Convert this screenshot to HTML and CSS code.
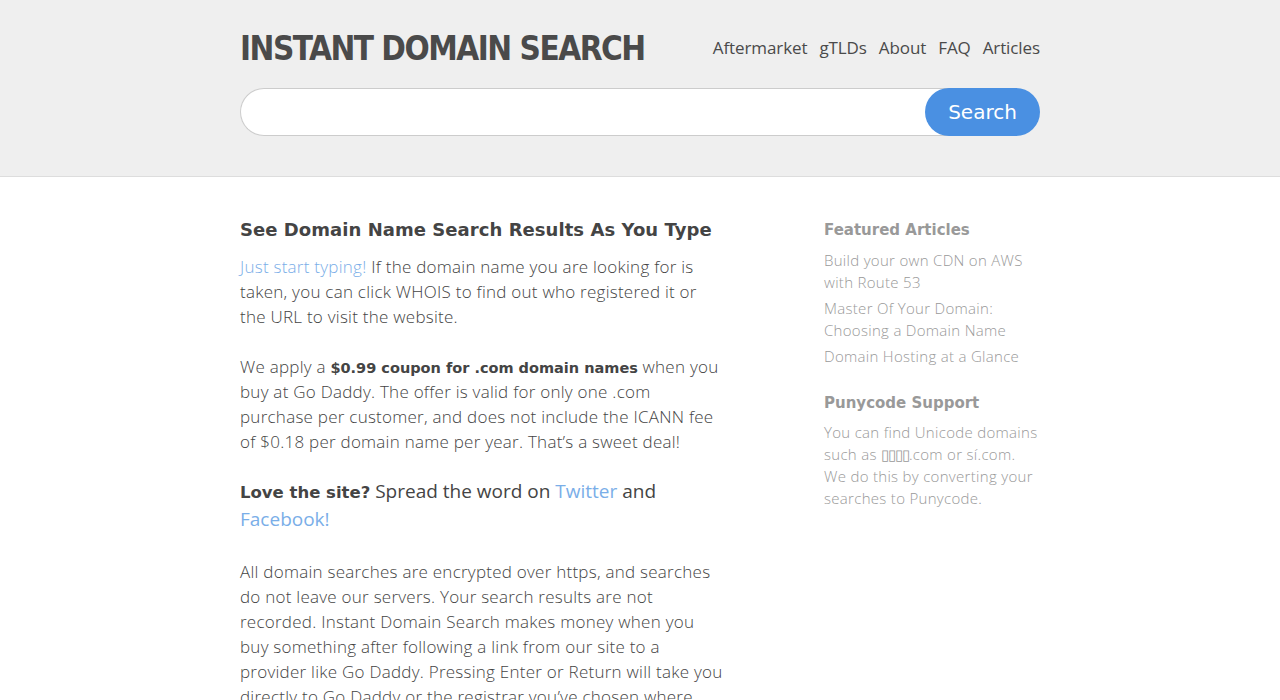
FILE: index.html
```html
<!DOCTYPE html>
<html lang="en">
<head>
<meta charset="utf-8">
<title>Instant Domain Search</title>
<link rel="stylesheet" href="styles.css">
</head>
<body>
<header class="top">
  <div class="wrap">
    <div class="bar">
      <div class="logo">INSTANT DOMAIN SEARCH</div>
      <nav class="nav">
        <a href="#">Aftermarket</a>
        <a href="#">gTLDs</a>
        <a href="#">About</a>
        <a href="#">FAQ</a>
        <a href="#">Articles</a>
      </nav>
    </div>
    <form class="search">
      <input class="search-input" type="text">
      <button class="search-btn" type="button">Search</button>
    </form>
  </div>
</header>
<main class="wrap content">
  <section class="main-col">
    <h2 class="title">See Domain Name Search Results As You Type</h2>
    <p class="para"><a class="link" href="#">Just start typing!</a> If the domain name you are looking for is taken, you can click WHOIS to find out who registered it or the URL to visit the website.</p>
    <p class="para">We apply a <b class="strong">$0.99 coupon for .com domain names</b> when you buy at Go Daddy. The offer is valid for only one .com purchase per customer, and does not include the ICANN fee of $0.18 per domain name per year. That’s a sweet deal!</p>
    <p class="love"><b class="strong">Love the site?</b> Spread the word on <a class="link" href="#">Twitter</a> and <a class="link" href="#">Facebook!</a></p>
    <p class="para">All domain searches are encrypted over https, and searches do not leave our servers. Your search results are not recorded. Instant Domain Search makes money when you buy something after following a link from our site to a provider like Go Daddy. Pressing Enter or Return will take you directly to Go Daddy or the registrar you’ve chosen where you can complete your purchase.</p>
  </section>
  <aside class="side">
    <h3 class="side-title">Featured Articles</h3>
    <ul class="side-list">
      <li><a href="#">Build your own CDN on AWS with Route 53</a></li>
      <li><a href="#">Master Of Your Domain: Choosing a Domain Name</a></li>
      <li><a href="#">Domain Hosting at a Glance</a></li>
    </ul>
    <h3 class="side-title">Punycode Support</h3>
    <p class="side-text">You can find Unicode domains such as <span class="boxes">&#x25AF;&#x25AF;&#x25AF;&#x25AF;</span>.com or sí.com. We do this by converting your searches to Punycode.</p>
  </aside>
</main>
</body>
</html>
```

FILE: styles.css
```css
* { box-sizing: border-box; }
html, body { margin: 0; padding: 0; }
body {
  background: #fff;
  color: #444;
  font-family: "Open Sans", "Liberation Sans", sans-serif;
  font-weight: 300;
}
a { text-decoration: none; }
.wrap { width: 800px; margin: 0 auto; }
.top {
  background: #efefef;
  border-bottom: 1px solid #ddd;
  height: 177px;
  padding-top: 28px;
}
.bar {
  display: flex;
  justify-content: space-between;
  align-items: center;
  height: 40px;
}
.logo {
  font-family: "DejaVu Sans Condensed", "DejaVu Sans", sans-serif;
  font-stretch: condensed;
  font-weight: bold;
  font-size: 33px;
  color: #4a4a4a;
  letter-spacing: -1.5px;
}
.nav { display: flex; gap: 12px; margin-top: -1px; }
.nav a { color: #4a4a4a; font-size: 17px; font-weight: 400; letter-spacing: -0.1px; }
.search {
  display: flex;
  margin-top: 20px;
  height: 48px;
}
.search-input {
  flex: 1;
  height: 48px;
  border: 1px solid #ccc;
  border-radius: 24px 0 0 24px;
  border-right: none;
  background: #fff;
  margin-right: -24px;
  outline: none;
}
.search-btn {
  width: 115px;
  height: 48px;
  border: none;
  border-radius: 24px;
  background: #4a90e2;
  color: #fff;
  font-family: "DejaVu Sans", sans-serif;
  font-size: 20px;
  position: relative;
}
.content {
  display: flex;
  justify-content: space-between;
  padding-top: 37px;
}
.main-col { width: 486px; }
.title {
  font-family: "DejaVu Sans", sans-serif;
  font-weight: bold;
  font-size: 18px;
  letter-spacing: 0.05px;
  color: #444;
  margin: 0 0 10px;
  padding-top: 2px;
  line-height: 28px;
}
.para {
  font-size: 17px;
  line-height: 25px;
  letter-spacing: 0.25px;
  margin: 0 0 25px;
}
.strong {
  font-family: "DejaVu Sans", sans-serif;
  font-weight: bold;
  font-size: 14.5px;
  letter-spacing: 0;
  line-height: 1;
}
.link { color: #7aaee8; }
.love {
  font-size: 19px;
  line-height: 28px;
  margin: -2px 0 26px;
  font-weight: 400;
}
.love .strong { font-size: 16.5px; }
.side { width: 216px; padding-top: 5px; }
.side-title {
  font-family: "DejaVu Sans", sans-serif;
  font-weight: bold;
  font-size: 15px;
  color: #999;
  margin: 0 0 8px;
  line-height: 22px;
}
.side-list { list-style: none; padding: 0; margin: 0 0 25px; }
.side-list li { margin-bottom: 4px; font-size: 15px; line-height: 22px; }
.side-list a, .side-text {
  color: #999;
  font-size: 15px;
  line-height: 22px;
  letter-spacing: 0.3px;
}
.side-text { margin: -1px 0 0; }
.boxes { letter-spacing: -1px; }
```
